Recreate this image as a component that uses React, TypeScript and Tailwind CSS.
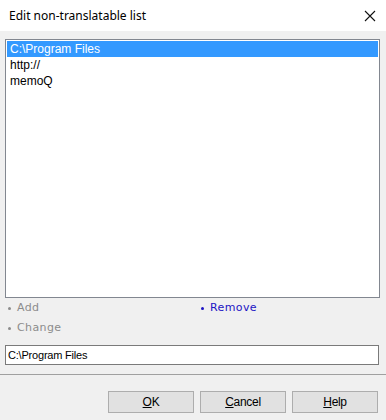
import React from "react";

const items = ["C:\\Program Files", "http://", "memoQ"];

function Link({ label, active }: { label: string; active?: boolean }) {
  return (
    <div className="flex items-center h-[20px]">
      <span
        className={
          "inline-block w-[3px] h-[3px] rounded-full mr-[6px] " +
          (active ? "bg-[#1c14c4]" : "bg-[#8c8c8c]")
        }
      />
      <span
        className={
          "text-[11px] tracking-[0.4px] " + (active ? "text-[#1c14c4]" : "text-[#8c8c8c]")
        }
        style={{ fontFamily: '"DejaVu Sans", Verdana, sans-serif' }}
      >
        {label}
      </span>
    </div>
  );
}

function Btn({ first, rest }: { first: string; rest: string }) {
  return (
    <div className="w-[86px] h-[22px] bg-[#e1e1e1] border border-[#adadad] flex items-center justify-center text-[12px] text-black tracking-[-0.3px]">
      <span>
        <u>{first}</u>
        {rest}
      </span>
    </div>
  );
}

export default function App() {
  return (
    <div
      className="w-[386px] h-[420px] flex flex-col bg-[#f0f0f0] overflow-hidden"
      style={{ fontFamily: '"Liberation Sans", Arial, sans-serif' }}
    >
      <div className="h-[31px] bg-white flex items-center justify-between pl-[9px] pr-[10px] shrink-0">
        <span
          className="text-[12px] text-black"
          style={{ fontFamily: '"Noto Sans", "Segoe UI", sans-serif' }}
        >
          Edit non-translatable list
        </span>
        <svg width="12" height="12" viewBox="0 0 12 12" className="mt-[1px]">
          <path d="M1 1 L11 11 M11 1 L1 11" stroke="#111" strokeWidth="1.1" fill="none" />
        </svg>
      </div>
      <div className="flex flex-col pt-[8px]">
        <div className="ml-[5px] w-[375px] h-[259px] border border-[#828790] bg-white p-px">
          {items.map((t, i) => (
            <div
              key={t}
              className={
                "h-[16px] flex items-center pl-[3px] text-[12px] " +
                (i === 0 ? "bg-[#3399ff] text-white" : "text-black")
              }
            >
              {t}
            </div>
          ))}
        </div>
        <div className="grid grid-cols-[193px_1fr] pl-[8px]">
          <Link label="Add" />
          <Link label="Remove" active />
          <Link label="Change" />
          <div />
        </div>
        <div className="ml-[5px] mt-[7px] w-[374px] h-[20px] border border-[#7a7a7a] bg-white flex items-center pl-[2px] text-[11px] tracking-[-0.2px] text-black">
          C:\Program Files
        </div>
        <div className="mt-[9px] h-px bg-[#a0a0a0]" />
        <div className="mt-[16px] flex justify-end gap-[6px] pr-[8px]">
          <Btn first="O" rest="K" />
          <Btn first="C" rest="ancel" />
          <Btn first="H" rest="elp" />
        </div>
      </div>
    </div>
  );
}
